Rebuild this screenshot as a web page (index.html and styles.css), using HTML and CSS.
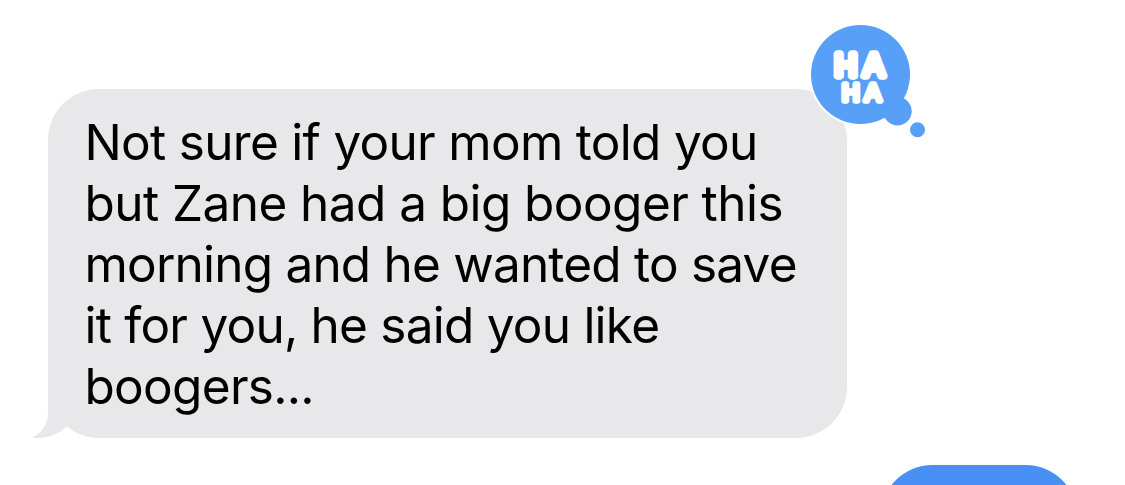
FILE: index.html
```html
<!DOCTYPE html>
<html lang="en">
  <head>
    <meta charset="UTF-8" />
    <meta name="viewport" content="width=device-width, initial-scale=1.0" />
    <title>Messages</title>
    <link rel="stylesheet" href="styles.css">
  </head>
  <body>
    <main class="conversation">
      <div class="message received">
        <p class="message-text">
          <span class="line line-1">Not sure if your mom told you</span>
          <span class="line line-2">but Zane had a big booger this</span>
          <span class="line line-3">morning and he wanted to save</span>
          <span class="line line-4">it for you, he said you like</span>
          <span class="line line-5">boogers...</span>
        </p>

        <svg class="tail" width="52" height="60" viewBox="0 0 52 60" aria-hidden="true">
          <path d="M16 0V34C16 46 10 55 0 60C14 61 26 57 35 48L52 20V0Z" />
        </svg>

        <!-- Tapback -->
        <svg class="tapback" width="120" height="120" viewBox="0 0 120 120">
          <g class="tapback-shape outline">
            <circle cx="52.5" cy="52.5" r="49.5" />
          </g>
          <g class="tapback-shape">
            <circle cx="52.5" cy="52.5" r="49.5" />
            <circle cx="89.5" cy="89.3" r="14.2" />
            <circle cx="109.5" cy="107.8" r="7.5" />
          </g>
          <text class="ha ha-top" x="26.7 55.4" y="53.7">HA</text>
          <text class="ha ha-bottom" x="34 56.7" y="79.3">HA</text>
        </svg>
      </div>

      <div class="message sent"></div>
    </main>
  </body>
</html>
```

FILE: styles.css
```css
* {
  margin: 0;
  padding: 0;
  box-sizing: border-box;
}

body {
  font-family: Inter, "Liberation Sans", sans-serif;
  background: #ffffff;
  color: #000000;
  overflow: hidden;
}

.conversation {
  display: flex;
  flex-direction: column;
  gap: 27px;
  height: 485px;
  padding: 89px 48px 0;
  overflow: hidden;
}

.message {
  position: relative;
  flex-shrink: 0;
  border-radius: 51px;
}

.received {
  align-self: flex-start;
  width: 799px;
  height: 349px;
  padding: 23px 36.5px;
  background: #e8e8ea;
}

.sent {
  align-self: flex-end;
  width: 196px;
  height: 102px;
  background: #4890f5;
}

.message-text {
  font-size: 49.5px;
  line-height: 61px;
}

.line {
  display: block;
  width: max-content;
  white-space: nowrap;
}

.line-1 {
  letter-spacing: -0.7px;
}

.line-2 {
  letter-spacing: -0.56px;
}

.line-3 {
  letter-spacing: -0.79px;
}

.line-4 {
  letter-spacing: -0.76px;
}

.line-5 {
  letter-spacing: -0.7px;
}

.tail {
  position: absolute;
  left: -16px;
  bottom: 0;
  fill: #e8e8ea;
}

.tapback {
  position: absolute;
  top: -67px;
  left: 760px;
}

.tapback-shape {
  fill: #579ff7;
}

.tapback-shape.outline {
  fill: none;
  stroke: #ffffff;
  stroke-width: 4px;
}

/* Thick round stroke gives the puffy lettering */
.ha {
  font-family: "Liberation Sans", sans-serif;
  font-weight: 400;
  fill: #ffffff;
  stroke: #ffffff;
  stroke-linejoin: round;
}

.ha-top {
  font-size: 30.5px;
  stroke-width: 7.4px;
}

.ha-bottom {
  font-size: 24px;
  stroke-width: 5.6px;
}
```
